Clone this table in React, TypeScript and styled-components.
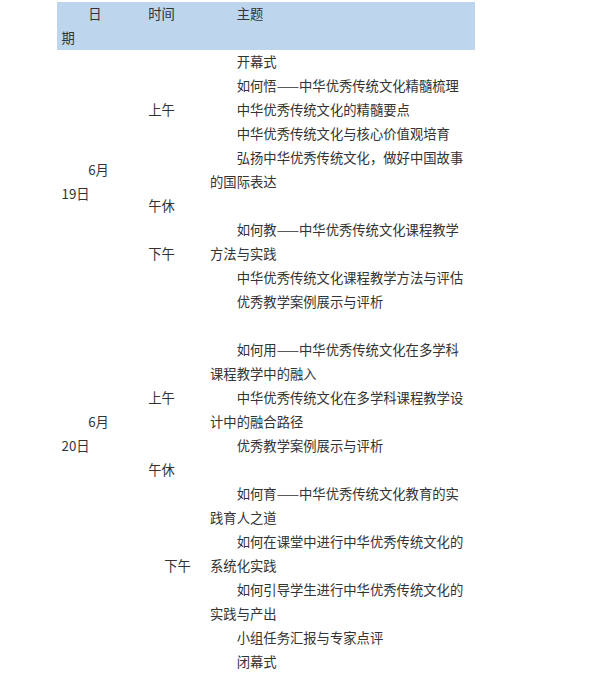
import React from "react";
import styled, { createGlobalStyle } from "styled-components";

const GlobalStyle = createGlobalStyle`
  html, body {
    margin: 0;
    padding: 0;
    background: #ffffff;
  }
  body {
    font-family: "Microsoft YaHei", "Noto Sans CJK SC", "Noto Sans", sans-serif;
    color: #333333;
  }
`;

const Page = styled.div`
  padding: 2px 0 0 57px;
`;

const Schedule = styled.table`
  width: 418px;
  table-layout: fixed;
  border-collapse: collapse;
  font-size: 13.33px;
  line-height: 24px;
  color: #333333;
`;

const HeadRow = styled.tr`
  background: #bdd6ee;
`;

const HeadCell = styled.th<{ $width: number }>`
  box-sizing: border-box;
  width: ${(p) => p.$width}px;
  padding: 0 4.5px;
  font-weight: normal;
  text-align: left;
  vertical-align: top;
  text-indent: 2em;
`;

const Cell = styled.td<{ $extra?: number }>`
  box-sizing: border-box;
  padding: 0 4.5px 0 ${(p) => 4.5 + (p.$extra ?? 0)}px;
  vertical-align: middle;
  text-align: left;
`;

const Para = styled.p`
  margin: 0;
  text-indent: 2em;
  min-height: 24px;
`;

type Block = {
  time: string[];
  timeExtra?: number;
  topics: string[];
};

type Day = {
  date: string[];
  blocks: Block[];
};

const days: Day[] = [
  {
    date: ["6月19日"],
    blocks: [
      {
        time: ["上午", ""],
        topics: [
          "开幕式",
          "如何悟——中华优秀传统文化精髓梳理",
          "中华优秀传统文化的精髓要点",
          "中华优秀传统文化与核心价值观培育",
          "弘扬中华优秀传统文化，做好中国故事的国际表达",
        ],
      },
      { time: ["午休"], topics: [""] },
      {
        time: ["下午", ""],
        topics: [
          "如何教——中华优秀传统文化课程教学方法与实践",
          "中华优秀传统文化课程教学方法与评估",
          "优秀教学案例展示与评析",
        ],
      },
    ],
  },
  {
    date: ["6月20日", "", "", "", "", ""],
    blocks: [
      {
        time: ["", "上午"],
        topics: [
          "",
          "如何用——中华优秀传统文化在多学科课程教学中的融入",
          "中华优秀传统文化在多学科课程教学设计中的融合路径",
          "优秀教学案例展示与评析",
        ],
      },
      { time: ["午休"], topics: [""] },
      {
        time: ["下午", ""],
        timeExtra: 16,
        topics: [
          "如何育——中华优秀传统文化教育的实践育人之道",
          "如何在课堂中进行中华优秀传统文化的系统化实践",
          "如何引导学生进行中华优秀传统文化的实践与产出",
          "小组任务汇报与专家点评",
          "闭幕式",
        ],
      },
    ],
  },
];

const Lines = ({ items }: { items: string[] }) => (
  <>
    {items.map((t, i) => (
      <Para key={i}>{t || "\u00a0"}</Para>
    ))}
  </>
);

export default function App() {
  return (
    <>
      <GlobalStyle />
      <Page>
        <Schedule>
          <thead>
            <HeadRow>
              <HeadCell $width={60}>日期</HeadCell>
              <HeadCell $width={88.5}>时间</HeadCell>
              <HeadCell $width={269.5}>主题</HeadCell>
            </HeadRow>
          </thead>
          <tbody>
            {days.map((day, d) =>
              day.blocks.map((block, b) => (
                <tr key={`${d}-${b}`}>
                  {b === 0 && (
                    <Cell rowSpan={day.blocks.length}>
                      <Lines items={day.date} />
                    </Cell>
                  )}
                  <Cell $extra={block.timeExtra}>
                    <Lines items={block.time} />
                  </Cell>
                  <Cell>
                    <Lines items={block.topics} />
                  </Cell>
                </tr>
              ))
            )}
          </tbody>
        </Schedule>
      </Page>
    </>
  );
}
